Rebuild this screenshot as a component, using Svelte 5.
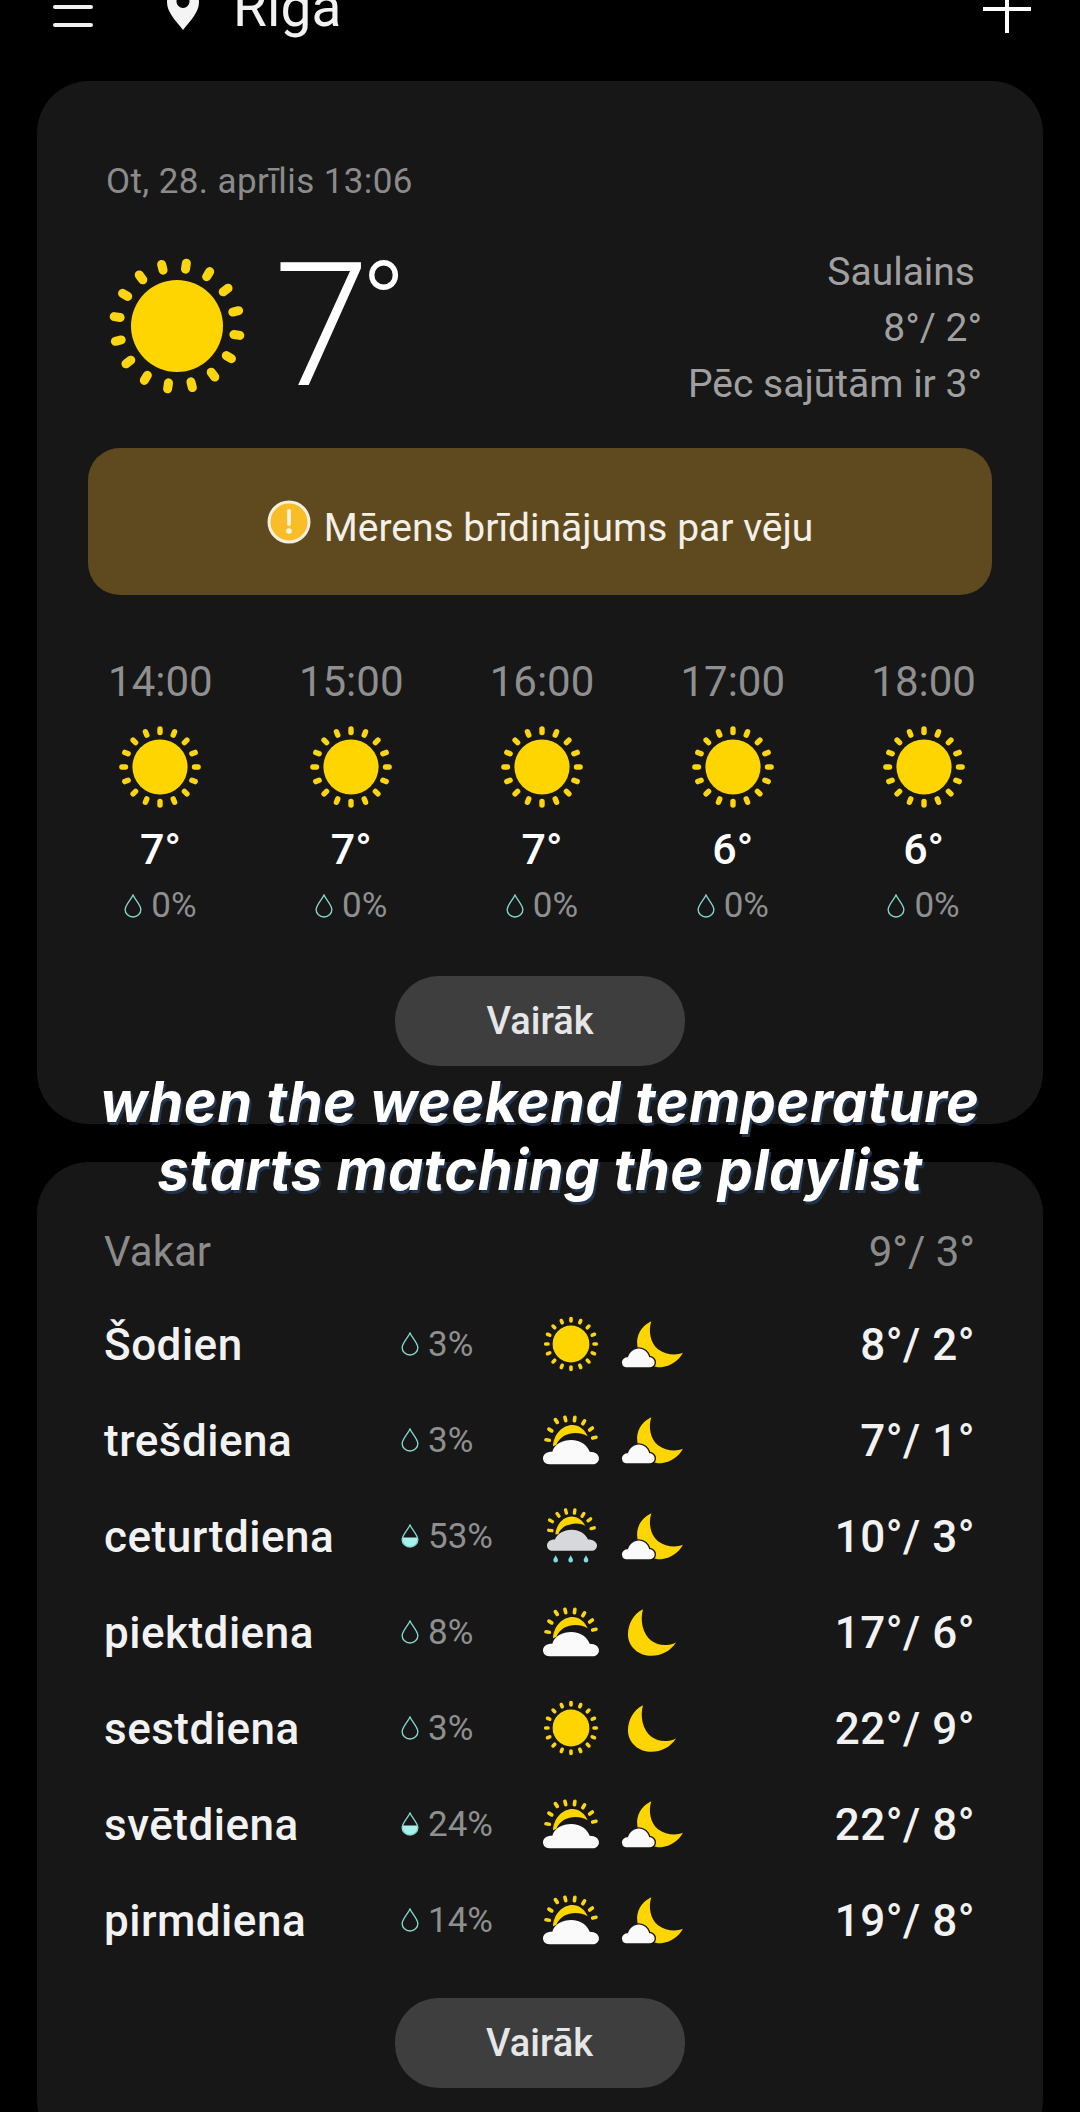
<script>
	const hours = [
		{ time: '14:00', temp: '7°' },
		{ time: '15:00', temp: '7°' },
		{ time: '16:00', temp: '7°' },
		{ time: '17:00', temp: '6°' },
		{ time: '18:00', temp: '6°' }
	];
	const days = [
		{ name: 'Šodien', rain: '3%', wet: false, day: 'sun', night: 'cloudmoon', temp: '8°/ 2°' },
		{ name: 'trešdiena', rain: '3%', wet: false, day: 'partly', night: 'cloudmoon', temp: '7°/ 1°' },
		{ name: 'ceturtdiena', rain: '53%', wet: true, day: 'rain', night: 'cloudmoon', temp: '10°/ 3°' },
		{ name: 'piektdiena', rain: '8%', wet: false, day: 'partly', night: 'moon', temp: '17°/ 6°' },
		{ name: 'sestdiena', rain: '3%', wet: false, day: 'sun', night: 'moon', temp: '22°/ 9°' },
		{ name: 'svētdiena', rain: '24%', wet: true, day: 'partly', night: 'cloudmoon', temp: '22°/ 8°' },
		{ name: 'pirmdiena', rain: '14%', wet: false, day: 'partly', night: 'cloudmoon', temp: '19°/ 8°' }
	];
	const sunRays = Array.from({ length: 16 }, (_, i) => i * 22.5);
	// little rays over the half hidden sun, [x, y] in icon units
	const partlyRays = [[14, 75], [22, 45], [40, 18], [67, 12], [95, 12], [122, 22], [144, 42], [154, 68]];
	const rainRays = [[22, 67], [24, 38], [45, 20], [69, 10], [95, 10], [120, 20], [139, 35], [149, 60]];

	function ray(p, cx, cy) {
		const dx = p[0] - cx;
		const dy = p[1] - cy;
		const len = Math.hypot(dx, dy);
		const ux = (dx / len) * 5;
		const uy = (dy / len) * 5;
		return { x1: p[0] - ux, y1: p[1] - uy, x2: p[0] + ux, y2: p[1] + uy };
	}
</script>

{#snippet sunIcon(size, turn)}
	<svg width={size} height={size} viewBox="-70 -70 140 140">
		<circle r="46" fill="#ffd500" />
		{#each sunRays as a}
			<line y1="-57.500" y2="-63.500" stroke="#fbd50f" stroke-width="9" stroke-linecap="round" transform={`rotate(${a + turn})`} />
		{/each}
	</svg>
{/snippet}

{#snippet drop(wet)}
	<svg class="drop" width="18" height="24" viewBox="0 0 17 23">
		{#if wet}
			<path d="M.9 13H16.1C16.4 18 13 22 8.5 22S.6 18 .9 13Z" fill="#a8f2ee" />
		{/if}
		<path d="M8.5 1C6.2 6 1 10.5 1 15c0 4 3.3 7 7.5 7s7.5-3 7.5-7C16 10.5 10.8 6 8.5 1Z" fill="none" stroke="#86d6cc" stroke-width="1.3" />
	</svg>
{/snippet}

{#snippet weather(kind)}
	{#if kind === 'sun'}
		{@render sunIcon(56, 0)}
	{:else if kind === 'partly'}
		<svg width="56" height="50" viewBox="0 0 168 150">
			{#each partlyRays as p}
				{@const r = ray(p, 85, 85)}
				<line x1={r.x1} y1={r.y1} x2={r.x2} y2={r.y2} stroke="#fbd50f" stroke-width="11" stroke-linecap="round" />
			{/each}
			<path d="M30 94C32 56 60 30 88 30c20 0 38 14 46 34-16-10-36-12-54-8-20 4-34 18-40 34Z" fill="#ffd500" />
			<path d="M20 148C5 148 0 138 0 130c0-12 10-20 28-20C34 88 58 75 85 75s47 15 55 35c18 0 28 10 28 20 0 10-8 18-18 18Z" fill="#fafafa" />
		</svg>
	{:else if kind === 'rain'}
		<svg width="56" height="57" viewBox="0 0 168 170">
			{#each rainRays as p}
				{@const r = ray(p, 85, 75)}
				<line x1={r.x1} y1={r.y1} x2={r.x2} y2={r.y2} stroke="#fbd50f" stroke-width="10" stroke-linecap="round" />
			{/each}
			<path d="M37 78C40 48 62 25 86 25c18 0 33 12 41 28-14-8-32-8-46-4-18 4-30 14-35 29Z" fill="#ffd500" />
			<path d="M28 128C18 128 12 120 12 112c0-10 8-18 24-18C42 78 62 65 86 65s42 13 49 29c16 0 27 8 27 18 0 9-7 16-16 16Z" fill="#d6d8db" />
			<path d="M38 141c-3 6-7 10-7 15a7 7 0 0 0 14 0c0-5-4-9-7-15ZM83 141c-3 6-7 10-7 15a7 7 0 0 0 14 0c0-5-4-9-7-15ZM129 141c-3 6-7 10-7 15a7 7 0 0 0 14 0c0-5-4-9-7-15Z" fill="#7fdde0" />
		</svg>
	{:else if kind === 'cloudmoon'}
		<svg width="61" height="47" viewBox="0 0 183 140">
			<path d="M88 0C58 14 42 42 46 72c4 36 34 68 72 66 28-2 52-20 65-43-23 9-53 5-75-11C86 66 78 30 88 0Z" fill="#ffd500" />
			<path d="M12 138C4 138 0 132 0 124c0-10 8-16 18-16C22 94 36 82 50 82c16 0 28 12 32 26 8 0 16 6 16 16 0 8-6 14-14 14Z" fill="#fafafa" stroke="#171717" stroke-width="8" paint-order="stroke" />
		</svg>
	{:else}
		<svg width="48" height="47" viewBox="0 0 144 140">
			<path d="M45 0C15 15 0 45 0 75c0 40 35 65 70 65 30 0 58-15 74-40-24 12-54 10-74-5C45 75 35 35 45 0Z" fill="#ffd500" />
		</svg>
	{/if}
{/snippet}

<div class="screen">
	<header class="topbar">
		<div class="burger"><span></span><span></span></div>
		<svg class="pin" width="32" height="42" viewBox="0 0 32 42">
			<path fill-rule="evenodd" d="M16 42C8 32 0 24 0 14 0 5 7 0 16 0s16 5 16 14c0 10-8 18-16 28Zm0-22a6.500 6.500 0 1 0 0-13 6.500 6.500 0 0 0 0 13Z" fill="#f4f4f4" />
		</svg>
		<span class="city">Rīga</span>
		<div class="plus"></div>
	</header>

	<section class="card now">
		<div class="date">Ot, 28. aprīlis 13:06</div>
		<div class="current">
			<div class="sunbox">{@render sunIcon(140, 8.500)}</div>
			<div class="bigtemp">7<span class="deg">°</span></div>
			<div class="summary">
				<div class="cond">Saulains</div>
				<div>8°/ 2°</div>
				<div>Pēc sajūtām ir 3°</div>
			</div>
		</div>
		<div class="alert">
			<svg width="44" height="44" viewBox="0 0 44 44">
				<circle cx="22" cy="22" r="20" fill="#f9bd28" stroke="#f5efe2" stroke-width="3" />
				<rect x="20.200" y="9" width="3.600" height="17" rx="1.800" fill="#fdf6e6" />
				<circle cx="22" cy="31" r="2.800" fill="#fdf6e6" />
			</svg>
			<span>Mērens brīdinājums par vēju</span>
		</div>
		<div class="hours">
			{#each hours as h}
				<div class="hour">
					<div class="time">{h.time}</div>
					{@render sunIcon(84, 0)}
					<div class="htemp">{h.temp}</div>
					<div class="hrain">{@render drop(false)}<span>0%</span></div>
				</div>
			{/each}
		</div>
		<button class="more">Vairāk</button>
	</section>

	<section class="card week">
		<div class="yesterday">
			<span>Vakar</span>
			<span>9°/ 3°</span>
		</div>
		{#each days as d}
			<div class="day">
				<div class="dname">{d.name}</div>
				<div class="drain">{@render drop(d.wet)}<span>{d.rain}</span></div>
				<div class="dicon">{@render weather(d.day)}</div>
				<div class="dicon">{@render weather(d.night)}</div>
				<div class="dtemp">{d.temp}</div>
			</div>
		{/each}
		<button class="more">Vairāk</button>
	</section>

	<div class="caption">when the weekend temperature<br />starts matching the playlist</div>
</div>

<style>
	:global(body) {
		background: #000;
	}
	.screen {
		position: relative;
		width: 1080px;
		height: 2112px;
		overflow: hidden;
		background: #000;
		font-family: Roboto, 'Liberation Sans', sans-serif;
		color: #fff;
		box-sizing: border-box;
		padding: 0 37px;
	}
	.topbar {
		height: 81px;
		margin: 0 -37px;
		padding: 0 49px 0 53px;
		display: flex;
		align-items: flex-start;
		position: relative;
	}
	.burger {
		width: 40px;
		display: flex;
		flex-direction: column;
		gap: 14px;
		padding-top: 5px;
	}
	.burger span {
		height: 4px;
		border-radius: 2px;
		background: #f0f0f0;
	}
	.pin {
		margin: -12px 0 0 74px;
	}
	.city {
		margin: -31px 0 0 34px;
		font-size: 55px;
		line-height: 76px;
		color: #f2f2f2;
	}
	.plus {
		margin-left: auto;
		margin-top: -15px;
		width: 48px;
		height: 48px;
		background:
			linear-gradient(#fff, #fff) center / 100% 4px no-repeat,
			linear-gradient(#fff, #fff) center / 4px 100% no-repeat;
	}
	.card {
		background: #171717;
		border-radius: 52px;
		box-sizing: border-box;
	}
	.now {
		height: 1043px;
		padding: 82px 27px 0;
		display: flex;
		flex-direction: column;
	}
	.date {
		margin-left: 42px;
		font-size: 35px;
		letter-spacing: 0.4px;
		line-height: 38px;
		color: #8b8b8b;
	}
	.current {
		height: 184px;
		margin-top: 34px;
		display: flex;
		align-items: flex-start;
	}
	.sunbox {
		margin: 21px 0 0 43px;
		height: 140px;
	}
	.bigtemp {
		margin: -22px 0 0 27px;
		font-size: 172px;
		font-weight: 300;
		line-height: 190px;
		color: #fff;
	}
	.deg {
		font-size: 122px;
		vertical-align: 36px;
		margin-left: -9px;
	}
	.summary {
		margin: 9px 34px 0 auto;
		text-align: right;
		font-size: 39px;
		line-height: 56px;
		color: #a0a0a0;
	}
	.cond {
		margin-right: 7px;
	}
	.alert {
		height: 147px;
		margin: 29px 24px 0;
		border-radius: 32px;
		background: #5f4a1f;
		display: flex;
		align-items: center;
		justify-content: center;
		gap: 13px;
		font-size: 39px;
		color: #f4f0e8;
	}
	.alert span {
		padding-top: 13px;
	}
	.hours {
		margin: 63px -3px 0 1px;
		display: grid;
		grid-template-columns: repeat(5, 1fr);
	}
	.hour {
		display: flex;
		flex-direction: column;
		align-items: center;
	}
	.time {
		font-size: 42px;
		line-height: 48px;
		color: #8f8f8f;
	}
	.hour svg:not(.drop) {
		margin-top: 19px;
	}
	.htemp {
		margin-top: 15px;
		font-size: 43px;
		font-weight: 500;
		line-height: 50px;
	}
	.hrain {
		margin-top: 12px;
		display: flex;
		align-items: center;
		gap: 9px;
		font-size: 35px;
		line-height: 40px;
		color: #8f8f8f;
	}
	.more {
		display: block;
		width: 290px;
		height: 90px;
		margin: 0 auto;
		padding: 0;
		border: 0;
		border-radius: 44px;
		background: #3e3e3e;
		color: #e6e6e6;
		font-family: inherit;
		font-size: 38px;
		font-weight: 500;
	}
	.now .more {
		margin-top: 50px;
	}
	.week {
		height: 990px;
		margin-top: 38px;
		padding: 67px 68px 0 67px;
		border-radius: 52px;
	}
	.yesterday {
		display: flex;
		justify-content: space-between;
		height: 46px;
		font-size: 42px;
		line-height: 46px;
		color: #8b8b8b;
	}
	.day {
		height: 96px;
		display: grid;
		grid-template-columns: 297px 135px 70px 92px 1fr;
		align-items: center;
	}
	.yesterday + .day {
		margin-top: 21px;
	}
	.dname {
		padding-top: 2px;
		font-size: 44px;
		letter-spacing: 0.5px;
		font-weight: 500;
		color: #f2f2f2;
	}
	.drain {
		display: flex;
		align-items: center;
		gap: 9px;
		font-size: 35px;
		color: #8f8f8f;
	}
	.dicon {
		display: flex;
		justify-content: center;
		align-items: center;
		height: 60px;
	}
	.dtemp {
		padding-top: 2px;
		text-align: right;
		font-size: 44px;
		letter-spacing: 0.5px;
		font-weight: 500;
		color: #f2f2f2;
	}
	.week .more {
		margin-top: 30px;
	}
	.caption {
		position: absolute;
		left: 0;
		right: 0;
		top: 1068px;
		text-align: center;
		font-family: Inter, 'Liberation Sans', sans-serif;
		font-size: 56px;
		letter-spacing: 0.5px;
		font-weight: 700;
		font-style: italic;
		line-height: 68px;
		color: #fff;
		text-shadow: 2px 3px 0 #22344d;
	}
</style>
